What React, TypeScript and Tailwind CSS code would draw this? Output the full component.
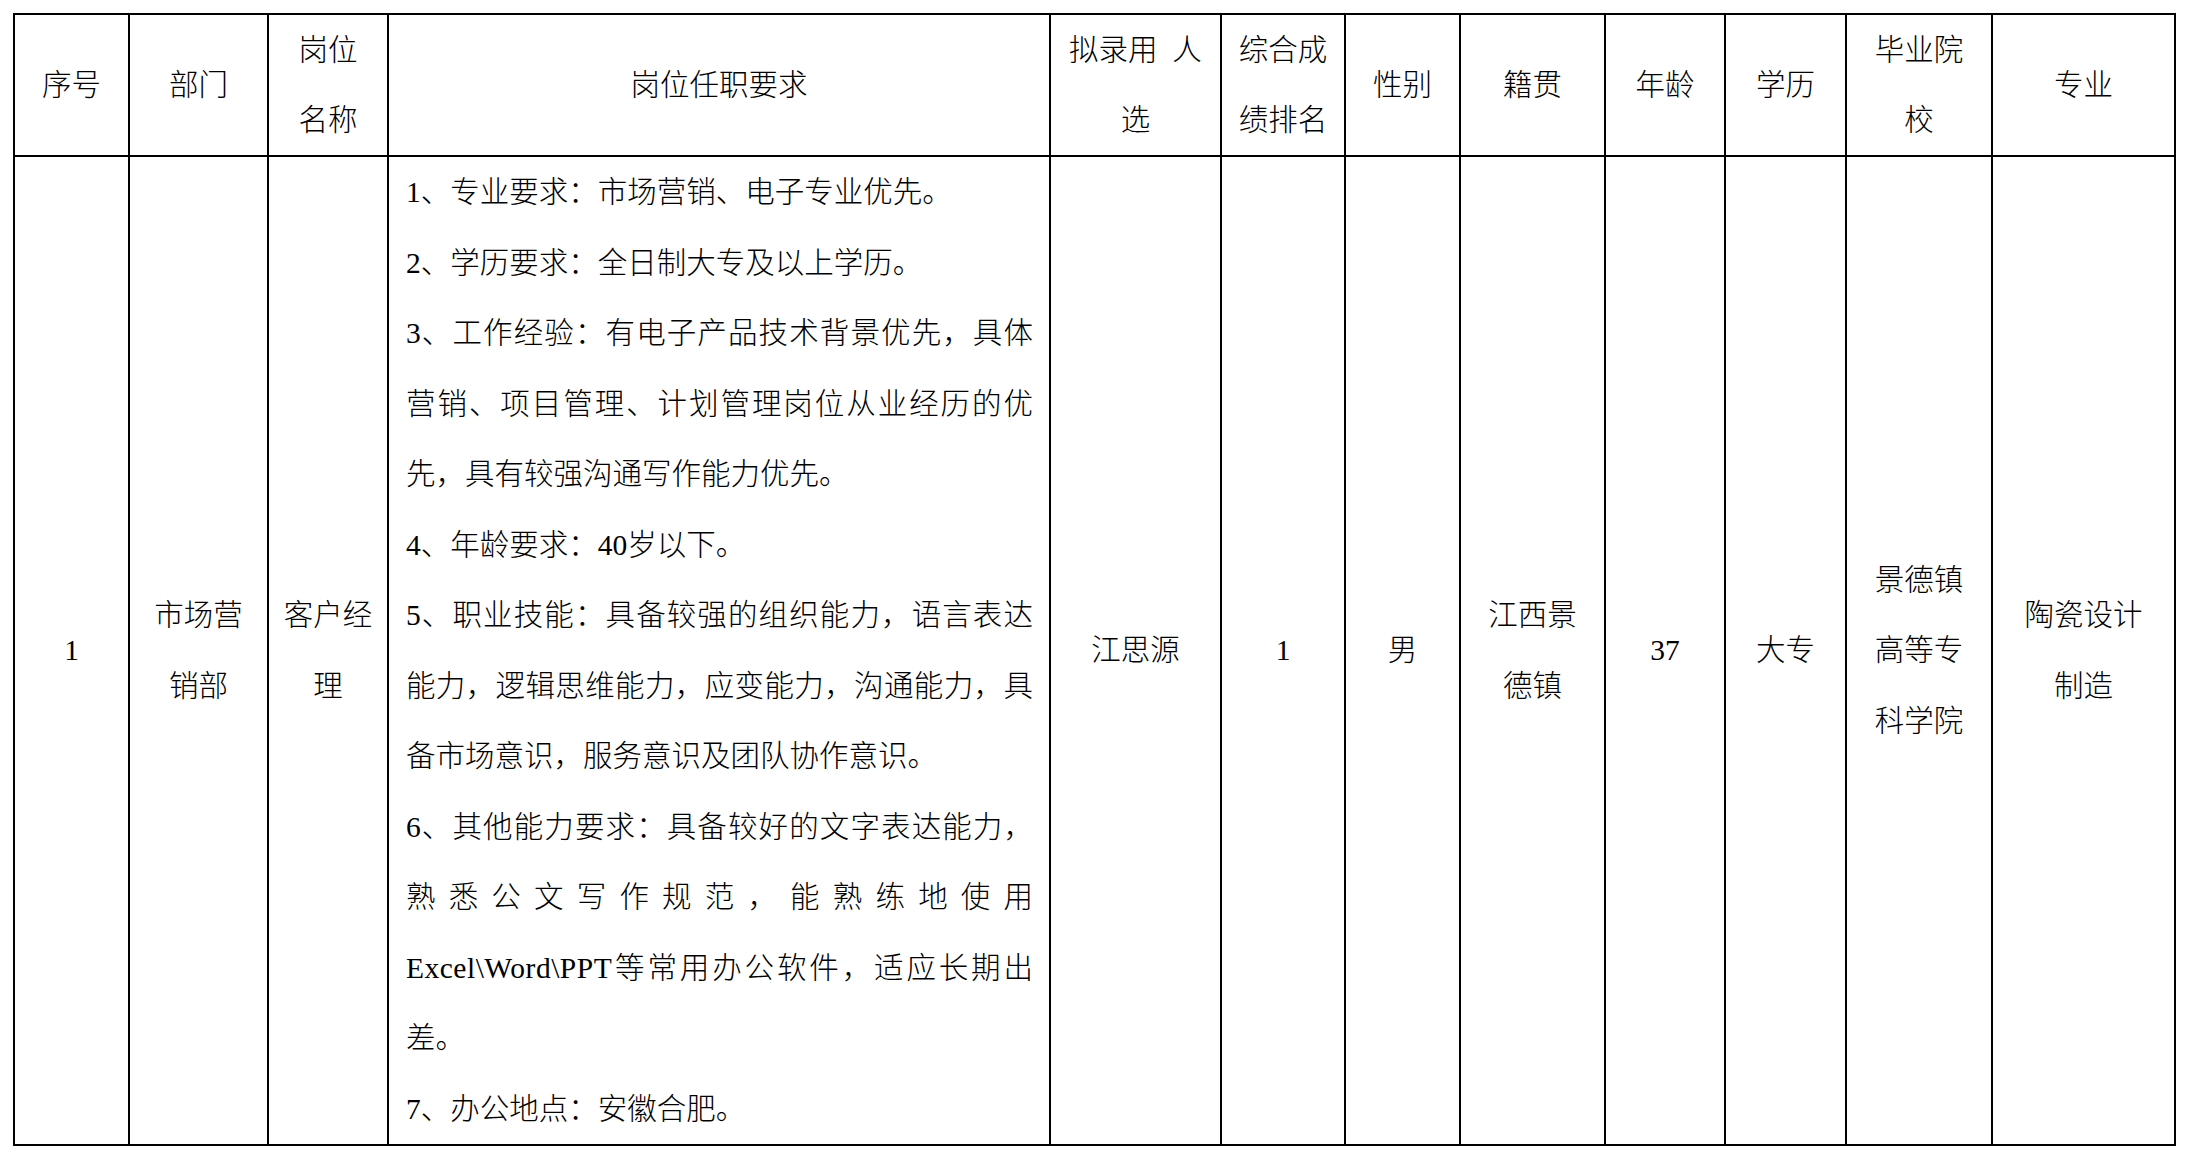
import React from "react";

const cell = "border-r-2 border-b-2 border-black text-center align-middle p-0";

function Lines({ lines }: { lines: string[] }) {
  return (
    <>
      {lines.map((l, i) => (
        <span key={i} className="block whitespace-nowrap">
          {l}
        </span>
      ))}
    </>
  );
}

export default function App() {
  const paras: React.ReactNode[] = [
    "1、专业要求：市场营销、电子专业优先。",
    "2、学历要求：全日制大专及以上学历。",
    "3、工作经验：有电子产品技术背景优先，具体营销、项目管理、计划管理岗位从业经历的优先，具有较强沟通写作能力优先。",
    "4、年龄要求：40岁以下。",
    "5、职业技能：具备较强的组织能力，语言表达能力，逻辑思维能力，应变能力，沟通能力，具备市场意识，服务意识及团队协作意识。",
    <>
      <span>6、其他能力要求：具备较好的文字表达能力，熟悉公文写作规范，能熟练地使用</span>
      <span className="tracking-[0.5px] font-normal">Excel\Word\PPT</span>
      <span>等常用办公软件，适应长期出</span>
      <span>差。</span>
    </>,
    "7、办公地点：安徽合肥。",
  ];
  return (
    <div
      lang="zh-CN"
      className="bg-white w-[2185px] h-[1156px] pt-[13px] pl-[13px] font-['Liberation_Serif','Noto_Sans_CJK_SC',serif] font-light text-[29.5px] leading-[70px] text-black [text-spacing-trim:space-all]"
    >
      <table className="border-separate border-spacing-0 table-fixed w-[2163px] border-l-2 border-t-2 border-black">
        <thead>
          <tr>
            <th className={`${cell} font-light w-[115px] h-[142px]`}>
              <Lines lines={["序号"]} />
            </th>
            <th className={`${cell} font-light w-[139px]`}>
              <Lines lines={["部门"]} />
            </th>
            <th className={`${cell} font-light w-[120px]`}>
              <Lines lines={["岗位", "名称"]} />
            </th>
            <th className={`${cell} font-light w-[662px]`}>
              <Lines lines={["岗位任职要求"]} />
            </th>
            <th className={`${cell} font-light w-[171px]`}>
              <Lines lines={["拟录用\u2002人", "选"]} />
            </th>
            <th className={`${cell} font-light w-[124px]`}>
              <Lines lines={["综合成", "绩排名"]} />
            </th>
            <th className={`${cell} font-light w-[115px]`}>
              <Lines lines={["性别"]} />
            </th>
            <th className={`${cell} font-light w-[145px]`}>
              <Lines lines={["籍贯"]} />
            </th>
            <th className={`${cell} font-light w-[120px]`}>
              <Lines lines={["年龄"]} />
            </th>
            <th className={`${cell} font-light w-[121px]`}>
              <Lines lines={["学历"]} />
            </th>
            <th className={`${cell} font-light w-[146px]`}>
              <Lines lines={["毕业院", "校"]} />
            </th>
            <th className={`${cell} font-light w-[183px]`}>
              <Lines lines={["专业"]} />
            </th>
          </tr>
        </thead>
        <tbody className="leading-[70.5px]">
          <tr>
            <td className={cell}>
              <Lines lines={["1"]} />
            </td>
            <td className={cell}>
              <Lines lines={["市场营", "销部"]} />
            </td>
            <td className={cell}>
              <Lines lines={["客户经", "理"]} />
            </td>
            <td className="border-r-2 border-b-2 border-black align-top pl-[17px] pr-[16px] py-0 text-justify">
              {paras.map((p, i) => (
                <p key={i} className="text-justify">
                  {p}
                </p>
              ))}
            </td>
            <td className={cell}>
              <Lines lines={["江思源"]} />
            </td>
            <td className={cell}>
              <Lines lines={["1"]} />
            </td>
            <td className={cell}>
              <Lines lines={["男"]} />
            </td>
            <td className={cell}>
              <Lines lines={["江西景", "德镇"]} />
            </td>
            <td className={cell}>
              <Lines lines={["37"]} />
            </td>
            <td className={cell}>
              <Lines lines={["大专"]} />
            </td>
            <td className={cell}>
              <Lines lines={["景德镇", "高等专", "科学院"]} />
            </td>
            <td className={cell}>
              <Lines lines={["陶瓷设计", "制造"]} />
            </td>
          </tr>
        </tbody>
      </table>
    </div>
  );
}
